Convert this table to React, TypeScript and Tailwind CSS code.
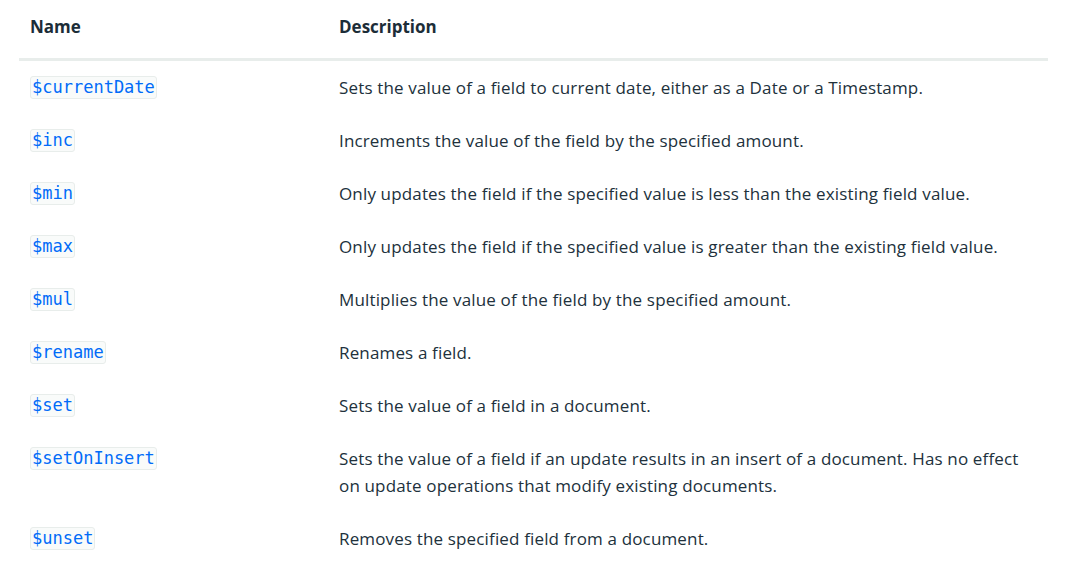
const rows: [string, string][] = [
  ["$currentDate", "Sets the value of a field to current date, either as a Date or a Timestamp."],
  ["$inc", "Increments the value of the field by the specified amount."],
  ["$min", "Only updates the field if the specified value is less than the existing field value."],
  ["$max", "Only updates the field if the specified value is greater than the existing field value."],
  ["$mul", "Multiplies the value of the field by the specified amount."],
  ["$rename", "Renames a field."],
  ["$set", "Sets the value of a field in a document."],
  [
    "$setOnInsert",
    "Sets the value of a field if an update results in an insert of a document. Has no effect on update operations that modify existing documents.",
  ],
  ["$unset", "Removes the specified field from a document."],
]

export default function App() {
  return (
    <div className="bg-white w-[1080px] h-[579px] overflow-hidden pl-[19px] pr-[32px] font-['Open_Sans',sans-serif] text-[#1c2d38]">
      <table className="w-full table-fixed border-collapse">
        <thead>
          <tr className="border-b-[3px] border-[#e8edeb]">
            <th className="w-[309px] text-left font-bold text-[17px] px-[11px] pt-[13px] pb-[18px] leading-[27px]">Name</th>
            <th className="text-left font-bold text-[17px] px-[11px] pt-[13px] pb-[18px] leading-[27px]">Description</th>
          </tr>
        </thead>
        <tbody>
          {rows.map(([name, desc]) => (
            <tr key={name}>
              <td className="align-top px-[11px] py-[13px] leading-[27px]">
                <code className="inline-block border border-[#e8edeb] bg-[#f9fbfa] rounded-[3px] px-[1px] leading-[21px] text-[17px] text-[#016bf8] font-['DejaVu_Sans_Mono',monospace]">
                  {name}
                </code>
              </td>
              <td className="align-top px-[11px] py-[13px] text-[17px] tracking-[0.15px] leading-[27px] text-[#21313c]">{desc}</td>
            </tr>
          ))}
        </tbody>
      </table>
    </div>
  )
}
